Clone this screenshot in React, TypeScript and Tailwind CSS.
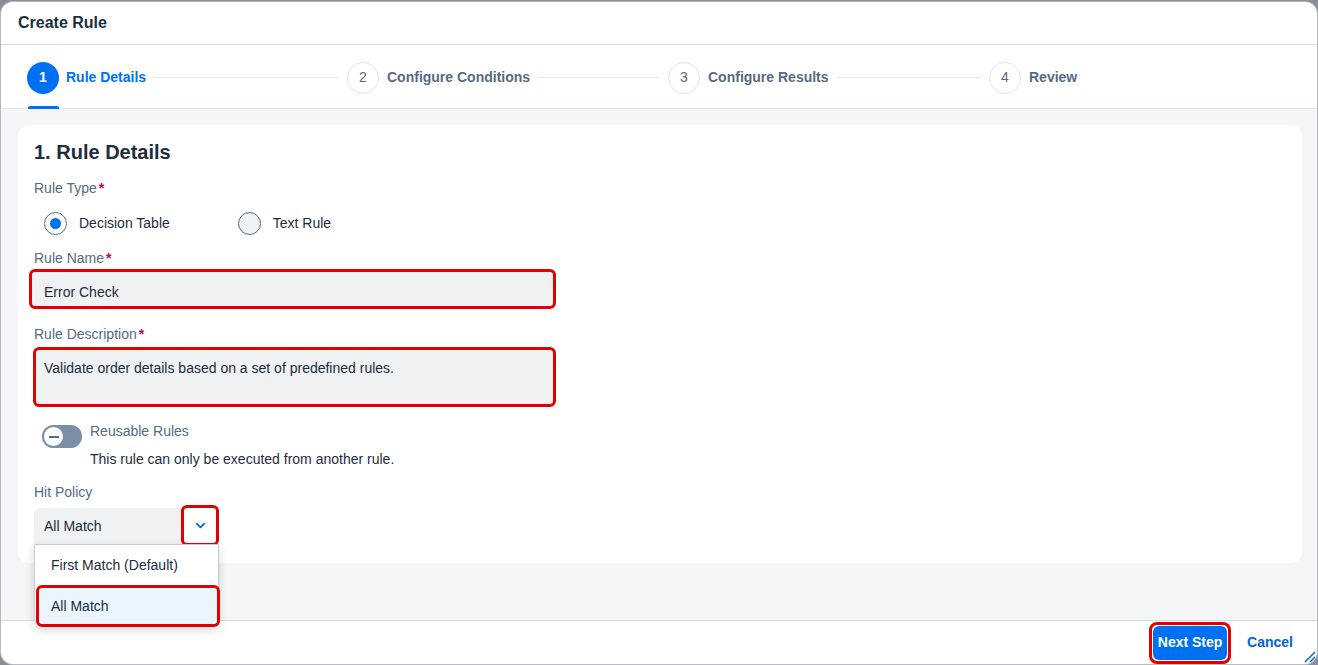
import { ChevronDown } from "lucide-react";

const steps = [
  { num: "1", label: "Rule Details", active: true },
  { num: "2", label: "Configure Conditions", active: false },
  { num: "3", label: "Configure Results", active: false },
  { num: "4", label: "Review", active: false },
];

function Label({ text, required }: { text: string; required?: boolean }) {
  return (
    <div className="text-[14px] leading-[18px] text-[#556b82]">
      {text}
      {required && <span className="ml-[2px] text-[#ba066c] font-bold">*</span>}
    </div>
  );
}

function Radio({ checked, label }: { checked?: boolean; label: string }) {
  return (
    <div className="flex items-center gap-[12px]">
      <div
        className={
          checked
            ? "w-[23px] h-[23px] rounded-full border border-[#556b82] bg-white flex items-center justify-center"
            : "w-[23px] h-[23px] rounded-full border border-[#556b82] bg-[#eff1f2]"
        }
      >
        {checked && <div className="w-[11px] h-[11px] rounded-full bg-[#0070f2]" />}
      </div>
      <span className="text-[14px] text-[#1d2d3e]">{label}</span>
    </div>
  );
}

function Stepper() {
  return (
    <div className="relative h-[64px] shrink-0 border-b border-[#e1e4e8] flex items-center pl-[26px] pt-[2px]">
      {steps.map((s, i) => (
        <div key={s.num} className={i === 3 ? "flex items-center" : i === 0 ? "w-[320px] flex items-center" : "w-[321px] flex items-center"}>
          <div
            className={
              s.active
                ? "w-[32px] h-[32px] rounded-full bg-[#0070f2] text-white font-bold text-[14px] flex items-center justify-center"
                : "w-[32px] h-[32px] rounded-full border border-[#dfe3e7] text-[#556b82] text-[14px] flex items-center justify-center"
            }
          >
            {s.num}
          </div>
          <span
            className={
              s.active
                ? "ml-[7px] text-[14px] font-bold text-[#0070f2] whitespace-nowrap"
                : "ml-[8px] text-[14px] font-bold text-[#556b82] whitespace-nowrap"
            }
          >
            {s.label}
          </span>
          {i < 3 && <div className="flex-1 h-px bg-[#e5e5e5] ml-[8px] mr-[9px]" />}
        </div>
      ))}
      <div className="absolute bottom-[-1px] left-[27px] w-[31px] h-[3px] rounded-t-[2px] bg-[#0070f2]" />
    </div>
  );
}

export default function App() {
  return (
    <div
      className="w-[1318px] h-[665px] bg-[#878e96] pt-[2px] pl-[1px]"
      style={{ fontFamily: '"Liberation Sans", Arial, sans-serif' }}
    >
      <div className="w-[1316px] h-[662px] bg-white rounded-[12px] overflow-hidden flex flex-col shadow-[0_0_0_1px_#b5bbc1]">
        {/* header */}
        <div className="h-[43px] shrink-0 border-b border-[#d9dde1] flex items-center px-[17px]">
          <span className="text-[16px] font-bold text-[#1d2d3e]">Create Rule</span>
        </div>

        <Stepper />

        {/* content */}
        <div className="h-[511px] shrink-0 bg-[#f5f6f7] pt-[16px] pl-[17px] pr-[15px]">
          <div className="h-[438px] bg-white rounded-[12px] px-[16px] pt-[15px]">
            <h2 className="text-[20px] leading-[24px] font-bold text-[#1d2d3e]">1. Rule Details</h2>

            <div className="mt-[15px]">
              <Label text="Rule Type" required />
            </div>
            <div className="mt-[4px] h-[44px] flex items-center pl-[10px] gap-[68px]">
              <Radio checked label="Decision Table" />
              <Radio label="Text Rule" />
            </div>

            <div className="mt-[4px]">
              <Label text="Rule Name" required />
            </div>
            <div className="mt-[2px] -ml-[5px] w-[527px] h-[40px] border-[3px] border-[#e30000] rounded-[6px] bg-[#eff1f2] flex items-center pl-[12px] pt-[6px] text-[14px] text-[#1d2d3e]">
              Error Check
            </div>

            <div className="mt-[16px]">
              <Label text="Rule Description" required />
            </div>
            <div className="mt-[4px] -ml-[1px] w-[523px] h-[60px] border-[3px] border-[#e30000] rounded-[6px] bg-[#eff1f2] pl-[8px] pt-[9px] text-[14px] leading-[18px] text-[#1d2d3e]">
              Validate order details based on a set of predefined rules.
            </div>

            <div className="mt-[15px] flex items-start pl-[8px]">
              <div className="mt-[3px] w-[40px] h-[23px] rounded-full bg-[#788fa6] p-[2px]">
                <div className="w-[19px] h-[19px] rounded-full bg-white flex items-center justify-center">
                  <div className="w-[10px] h-[2px] bg-[#556b82]" />
                </div>
              </div>
              <div className="ml-[8px]">
                <div className="text-[14px] leading-[18px] text-[#556b82]">Reusable Rules</div>
                <div className="mt-[10px] text-[14px] leading-[18px] text-[#1d2d3e]">
                  This rule can only be executed from another rule.
                </div>
              </div>
            </div>

            <div className="mt-[15px]">
              <Label text="Hit Policy" />
            </div>
            <div className="mt-[7px] relative w-[184px] h-[36px] bg-[#eff1f2] rounded-t-[6px] flex items-center pl-[10px] text-[14px] text-[#1d2d3e]">
              All Match
              <div className="absolute left-[147px] top-[-3px] w-[38px] h-[41px] border-[3px] border-[#e30000] rounded-[6px] bg-white flex items-center justify-center">
                <ChevronDown size={15} strokeWidth={2.75} color="#0064d9" />
              </div>

              {/* dropdown */}
              <div className="absolute z-10 left-0 top-[36px] w-[185px] h-[82px] bg-white border border-[#c8cdd2] rounded-b-[8px] shadow-[0_4px_10px_rgba(34,53,72,0.2)]">
                <div className="h-[40px] flex items-center pl-[16px] text-[14px] text-[#1d2d3e]">First Match (Default)</div>
                <div className="ml-[1px] w-[184px] h-[42px] border-[3px] border-[#e30000] rounded-[6px] bg-[#eaf5fe] flex items-center pl-[12px] text-[14px] text-[#1d2d3e]">
                  All Match
                </div>
              </div>
            </div>
          </div>
        </div>

        {/* footer */}
        <div className="relative h-[44px] shrink-0 border-t border-[#d9dde1] flex items-center justify-end pr-[24px]">
          <div className="w-[82px] h-[42px] border-[3px] border-[#e30000] rounded-[8px] p-[1px]">
            <button className="w-full h-full rounded-[6px] bg-[#0070f2] text-white text-[14px] font-bold">Next Step</button>
          </div>
          <button className="ml-[16px] text-[14px] font-bold text-[#0064d9]">Cancel</button>
          <svg className="absolute right-[1px] bottom-[1px]" width="14" height="14" viewBox="0 0 14 14">
            <line x1="3" y1="13" x2="13" y2="3" stroke="#0064d9" strokeWidth="1.5" />
            <line x1="8" y1="13" x2="13" y2="8" stroke="#0064d9" strokeWidth="1.5" />
          </svg>
        </div>
      </div>
    </div>
  );
}
